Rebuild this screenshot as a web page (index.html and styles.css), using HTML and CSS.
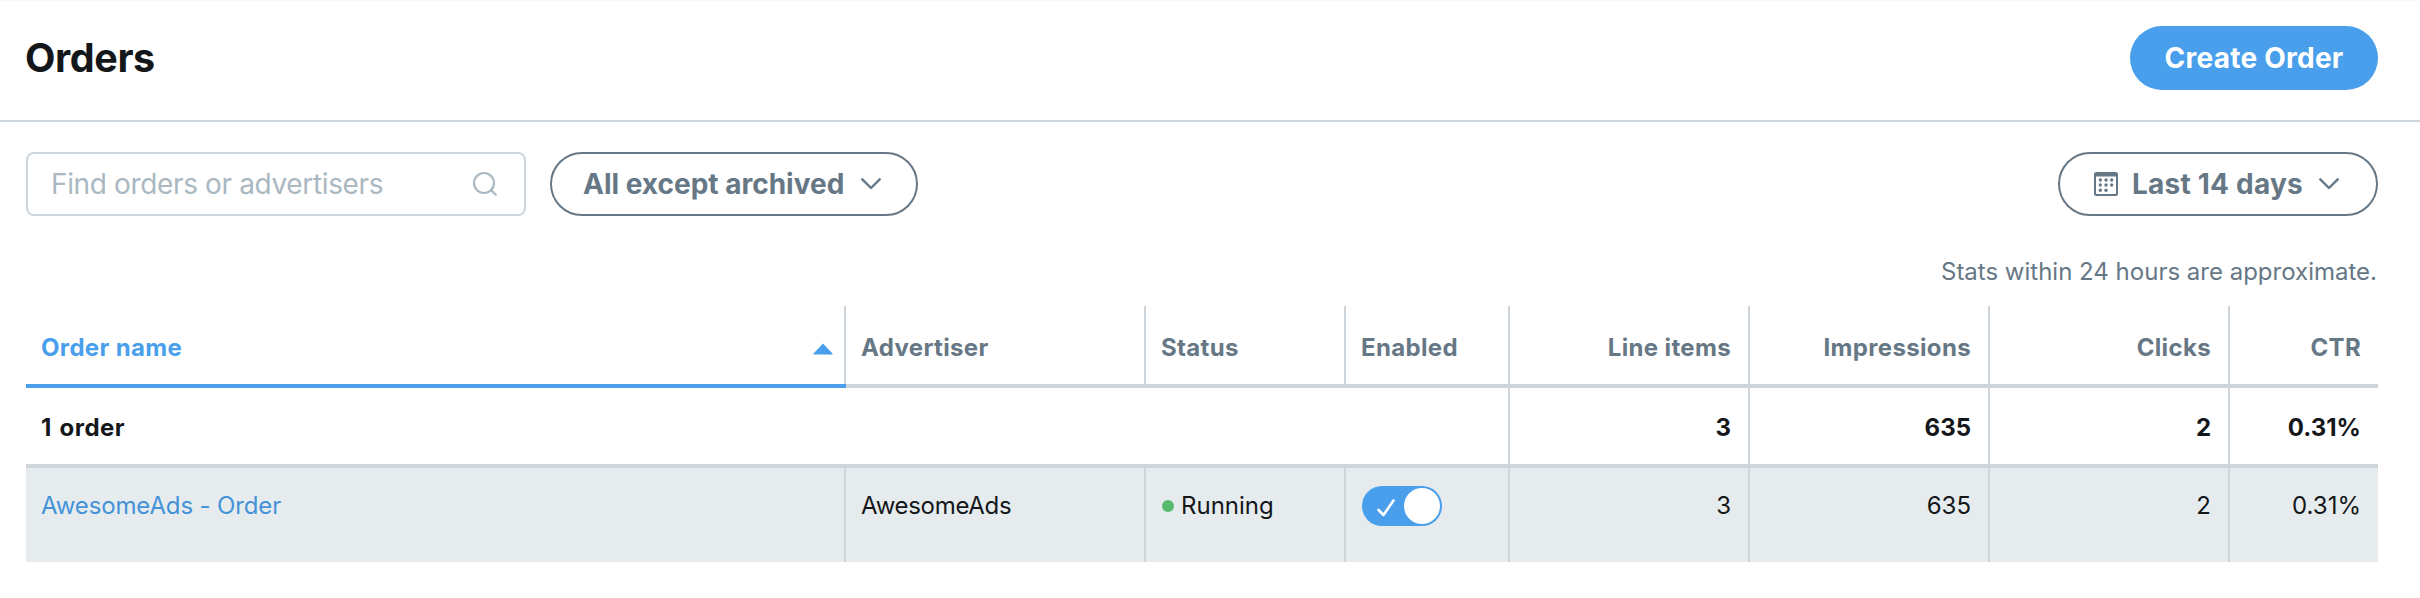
FILE: index.html
```html
<!DOCTYPE html>
<html lang="en">
<head>
<meta charset="utf-8">
<title>Orders</title>
<link rel="stylesheet" href="styles.css">
</head>
<body>
<header class="page-header">
  <h1 class="page-title"><span>Orders</span></h1>
  <button class="btn btn-primary"><span class="create-label">Create Order</span></button>
</header>
<main class="content">
  <div class="toolbar">
    <div class="search">
      <span class="search-placeholder">Find orders or advertisers</span>
      <svg class="search-icon" width="26" height="26" viewBox="0 0 26 26"><circle cx="12" cy="12" r="10"/><path d="M19 19l4.7 4.7"/></svg>
    </div>
    <button class="btn btn-outline filter"><span class="filter-label">All except archived</span>
      <svg class="chevron" width="20" height="12" viewBox="0 0 20 12"><path d="M1.3 1.3L10 10l8.7-8.7"/></svg>
    </button>
    <button class="btn btn-outline dates">
      <svg class="calendar" width="24" height="24" viewBox="0 0 24 24">
        <path class="calendar-frame" fill-rule="evenodd" d="M2.5 0h19A2.5 2.5 0 0 1 24 2.500v19a2.500 2.500 0 0 1-2.500 2.500h-19A2.500 2.500 0 0 1 0 21.500v-19A2.500 2.500 0 0 1 2.500 0zM2 4.500v16.500a1 1 0 0 0 1 1h18a1 1 0 0 0 1-1V4.500z"/>
        <g><circle cx="6.300" cy="8" r="1.700"/><circle cx="12" cy="8" r="1.700"/><circle cx="17.700" cy="8" r="1.700"/><circle cx="6.300" cy="13" r="1.700"/><circle cx="12" cy="13" r="1.700"/><circle cx="17.700" cy="13" r="1.700"/><circle cx="6.300" cy="18.200" r="1.700"/><circle cx="12" cy="18.200" r="1.700"/></g>
      </svg>
      <span class="dates-label">Last 14 days</span>
      <svg class="chevron" width="20" height="12" viewBox="0 0 20 12"><path d="M1.3 1.3L10 10l8.7-8.7"/></svg>
    </button>
  </div>
  <p class="note"><span>Stats within 24 hours are approximate.</span></p>
  <div class="table">
    <div class="row head">
      <div class="cell sorted"><span>Order name</span><svg width="20" height="12" viewBox="0 0 20 12"><path d="M10 .5L19.500 10.500Q20 11.500 19 11.500H1Q0 11.500 .5 10.500z"/></svg></div>
      <div class="cell"><span>Advertiser</span></div>
      <div class="cell"><span>Status</span></div>
      <div class="cell"><span>Enabled</span></div>
      <div class="cell num"><span>Line items</span></div>
      <div class="cell num"><span>Impressions</span></div>
      <div class="cell num"><span>Clicks</span></div>
      <div class="cell num"><span>CTR</span></div>
    </div>
    <div class="row totals">
      <div class="cell wide"><span>1 order</span></div>
      <div class="cell num"><span>3</span></div>
      <div class="cell num"><span>635</span></div>
      <div class="cell num"><span>2</span></div>
      <div class="cell num"><span>0.31%</span></div>
    </div>
    <div class="row item">
      <div class="cell"><a class="link">AwesomeAds - Order</a></div>
      <div class="cell"><span class="advertiser">AwesomeAds</span></div>
      <div class="cell status"><i class="dot"></i><span>Running</span></div>
      <div class="cell enabled"><div class="toggle"><svg width="18" height="18" viewBox="0 0 18 18"><path d="M1.500 11l5 5L16.500 1.500"/></svg><i class="knob"></i></div></div>
      <div class="cell num"><span>3</span></div>
      <div class="cell num"><span>635</span></div>
      <div class="cell num"><span>2</span></div>
      <div class="cell num"><span>0.31%</span></div>
    </div>
  </div>
</main>
</body>
</html>
```
FILE: styles.css
```css
* { box-sizing: border-box; }
body {
  margin: 0;
  background: #fff;
  color: #14171a;
  font-family: Inter, "Liberation Sans", sans-serif;
  font-size: 24px;
  line-height: 32px;
}
.page-header {
  display: flex;
  align-items: center;
  justify-content: space-between;
  height: 122px;
  padding: 0 42px 5px 25px;
  border-top: 1px solid #f7f8f8;
  border-bottom: 2px solid #ced5db;
}
.page-title { margin: 0; font-size: 39.5px; line-height: 48px; font-weight: 700; letter-spacing: -.4px; }
.page-title span { display: block; margin-top: -1px; }
.btn {
  display: flex;
  align-items: center;
  height: 64px;
  border-radius: 32px;
  font: 700 28px/36px Inter, "Liberation Sans", sans-serif;
  white-space: nowrap;
}
.btn-primary { width: 248px; justify-content: center; border: 0; padding: 0; background: #4a9fec; color: #fff; letter-spacing: .25px; }
.btn-outline { border: 2px solid #667785; background: #fff; color: #667785; }
.content { padding: 30px 42px 0 26px; }
.toolbar { display: flex; align-items: center; }
.search {
  display: flex;
  align-items: center;
  justify-content: space-between;
  width: 500px;
  height: 64px;
  padding: 0 26px 0 23px;
  border: 2px solid #ced5db;
  border-radius: 8px;
}
.search-placeholder { color: #aab8c2; font-size: 28px; letter-spacing: -.36px; }
.search-icon { fill: none; stroke: #aab8c2; stroke-width: 2.2; stroke-linecap: round; }
.chevron { fill: none; stroke: currentColor; stroke-width: 2.4; stroke-linecap: round; stroke-linejoin: round; }
.filter { justify-content: space-between; width: 368px; margin-left: 24px; padding: 0 35px 0 31px; }
.dates { width: 320px; margin-left: auto; padding: 0 37px 0 34px; }
.dates .chevron { margin-left: auto; }
.dates-label { margin-left: 14px; letter-spacing: .22px; }
.calendar { fill: currentColor; }
.note { margin: 0; padding: 40px 1px 0 0; text-align: right; color: #667785; }
.table { margin-top: 18px; }
.row { display: grid; grid-template-columns: 820px 300px 200px 164px 240px 240px 240px 148px; }
.cell { display: flex; align-items: center; padding: 0 17px 0 15px; border-right: 2px solid #ced5db; }
.cell:last-child { border-right: 0; }
.num { justify-content: flex-end; }
.head { height: 82px; font-weight: 700; color: #667785; letter-spacing: .35px; }
.head .cell { box-shadow: inset 0 -4px #ced5db; padding-top: 2px; }
.head .sorted { justify-content: space-between; padding-right: 11px; color: #4a9fec; position: relative; }
.head .sorted::after { content: ""; position: absolute; left: 0; right: -2px; bottom: 0; height: 4px; background: #4a9fec; }
.sorted svg { fill: #4a9fec; margin-top: 2px; }
.totals { height: 80px; font-weight: 700; border-bottom: 4px solid #ced5db; }
.totals .cell { padding-top: 3px; }
.wide { grid-column: span 4; letter-spacing: .5px; word-spacing: 1.5px; }
.item { height: 94px; background: #e6ecee; }
.item .cell { padding-bottom: 18px; }
.item .enabled { padding-left: 16px; }
.item .status { padding-left: 16px; }
.link { color: #4492d8; letter-spacing: -.14px; }
.advertiser { letter-spacing: -.3px; }
.dot { width: 12px; height: 12px; margin-right: 7px; border-radius: 50%; background: #59b96c; }
.toggle {
  display: flex;
  align-items: center;
  justify-content: space-between;
  width: 80px;
  height: 40px;
  padding: 2px 2px 2px 15px;
  border-radius: 20px;
  background: #4a9fec;
}
.toggle svg { fill: none; stroke: #fff; stroke-width: 2.6; stroke-linecap: round; stroke-linejoin: round; margin-top: 3px; }
.knob { width: 36px; height: 36px; border-radius: 50%; background: #fff; }
```
